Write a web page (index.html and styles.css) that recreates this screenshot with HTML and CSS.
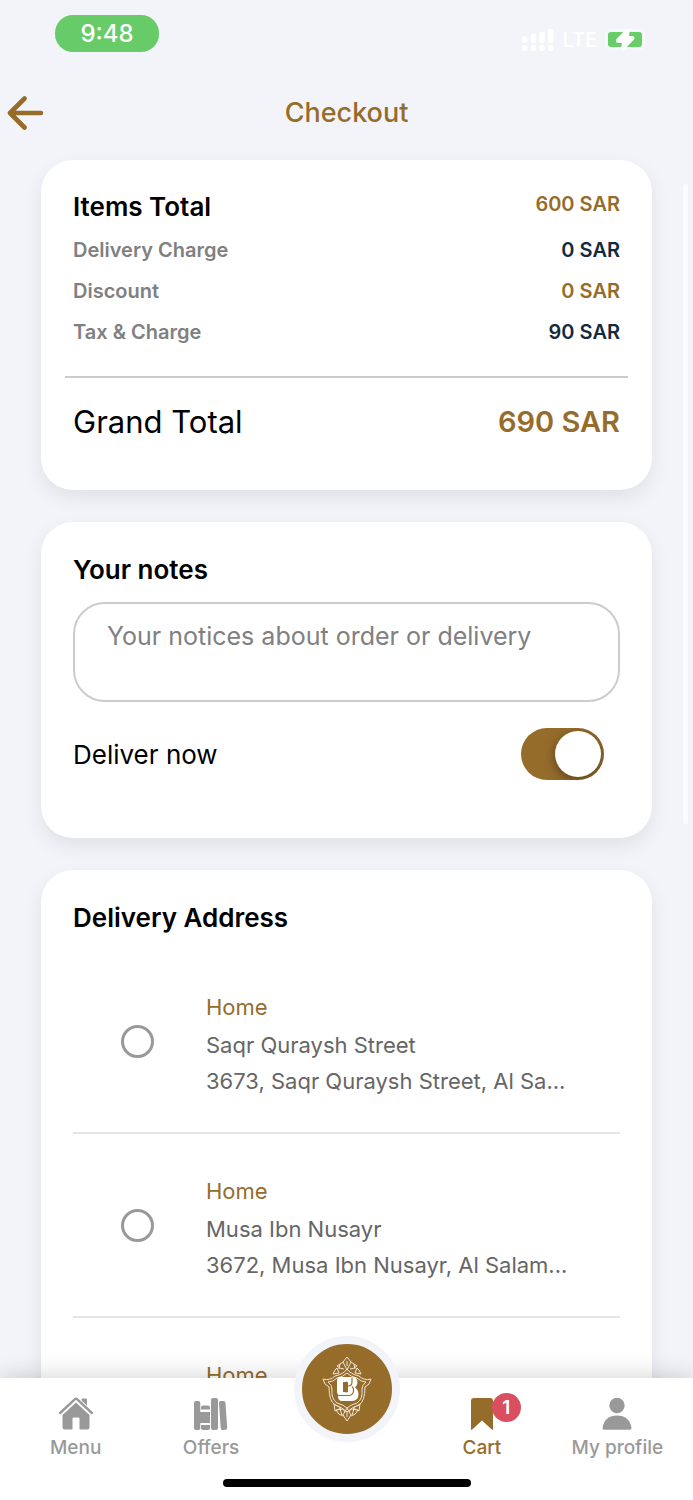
FILE: index.html
```html
<!DOCTYPE html>
<html lang="en">
  <head>
    <meta charset="utf-8">
    <meta name="viewport" content="width=device-width, initial-scale=1">
    <title>Checkout</title>
    <link rel="stylesheet" href="styles.css">
  </head>
  <body>
    <div class="status-bar">
      <span class="clock">9:48</span>
      <div class="signals">
        <svg width="32" height="22" viewBox="0 0 32 22" fill="#fff">
          <rect x="0" y="7" width="5.500" height="7" rx="2"/>
          <rect x="8.700" y="5" width="5.500" height="9" rx="2"/>
          <rect x="17.300" y="3" width="5.500" height="11" rx="2"/>
          <rect x="26" y="0" width="5.500" height="14" rx="2"/>
          <rect x="0" y="16" width="5.500" height="6" rx="2"/>
          <rect x="8.700" y="16" width="5.500" height="6" rx="2"/>
          <rect x="17.300" y="16" width="5.500" height="6" rx="2"/>
          <rect x="26" y="16" width="5.500" height="6" rx="2"/>
        </svg>
        <span>LTE</span>
        <svg width="44" height="22" viewBox="0 0 44 22">
          <rect x="1" y="1" width="38" height="19" rx="5" fill="none" stroke="#f7f8fb" stroke-width="2"/>
          <path d="M41 8q2 3 0 6z" fill="#f8f9fc"/>
          <rect x="3" y="3" width="34" height="15" rx="3" fill="#67cd67"/>
          <path d="M21 0L11.500 10Q10 13.500 13 14H17L15.500 20.500L18.500 21.500L29 10.500Q30.500 7.500 27.500 7H24L25 0.500z" fill="#fff"/>
        </svg>
      </div>
    </div>

    <header class="header">
      <button type="button" class="back" aria-label="Back">
        <svg width="37" height="34" viewBox="0 0 37 34" fill="none" stroke="#966c2b" stroke-width="4.600" stroke-linecap="round" stroke-linejoin="round">
          <path d="M17.500 2.500L3 17L17.500 31.500M3 17H34"/>
        </svg>
      </button>
      <h1>Checkout</h1>
    </header>

    <main class="content">
      <section class="card totals">
        <div class="row items">
          <h2>Items Total</h2>
          <span class="amount gold">600 SAR</span>
        </div>
        <div class="row">
          <span class="name">Delivery Charge</span>
          <span class="amount">0 SAR</span>
        </div>
        <div class="row">
          <span class="name">Discount</span>
          <span class="amount gold">0 SAR</span>
        </div>
        <div class="row">
          <span class="name">Tax &amp; Charge</span>
          <span class="amount">90 SAR</span>
        </div>
        <hr>
        <div class="row grand">
          <span>Grand Total</span>
          <strong>690 SAR</strong>
        </div>
      </section>

      <section class="card notes">
        <h2><label for="notes">Your notes</label></h2>
        <textarea id="notes" placeholder="Your notices about order or delivery"></textarea>
        <div class="deliver">
          <label for="deliver-now">Deliver now</label>
          <input type="checkbox" class="switch" id="deliver-now" checked>
        </div>
      </section>

      <section class="card addresses">
        <h2>Delivery Address</h2>
        <div class="address">
          <input type="radio" name="address" id="address1">
          <label for="address1">
            <span class="type">Home</span>
            <span>Saqr Quraysh Street</span>
            <span>3673, Saqr Quraysh Street, Al Sa...</span>
          </label>
        </div>
        <div class="address">
          <input type="radio" name="address" id="address2">
          <label for="address2">
            <span class="type">Home</span>
            <span>Musa Ibn Nusayr</span>
            <span>3672, Musa Ibn Nusayr, Al Salam...</span>
          </label>
        </div>
        <div class="address">
          <input type="radio" name="address" id="address3">
          <label for="address3">
            <span class="type">Home</span>
          </label>
        </div>
      </section>
    </main>

    <div class="scroll-thumb"></div>

    <footer class="bottom">
      <nav class="tabs">
        <a href="#menu">
          <svg width="34" height="34" viewBox="0 0 34 34" fill="#999">
            <path d="M22.500 2.500Q22.500 1.500 23.500 1.500H27Q28 1.500 28 2.500V12L22.500 7z"/>
            <path d="M17 5.500L30.500 18V30.500Q30.500 32.500 28.500 32.500H20.500V21.500Q20.500 20.500 19.500 20.500H14.500Q13.500 20.500 13.500 21.500V32.500H5.500Q3.500 32.500 3.500 30.500V18z"/>
            <path d="M1.200 16.500L16 2.500Q17 1.600 18 2.500L32.800 16.500" fill="none" stroke="#fff" stroke-width="5"/>
            <path d="M1.200 16L16 2.200Q17 1.300 18 2.200L32.800 16" fill="none" stroke="#999" stroke-width="2.400" stroke-linecap="round"/>
          </svg>
          <span>Menu</span>
        </a>
        <a href="#offers">
          <svg width="34" height="34" viewBox="0 0 34 34" fill="#999">
            <rect x="0" y="4" width="6.300" height="29" rx="2"/>
            <path d="M7 12.500V10.500Q7 8.500 9 8.500H14Q16 8.500 16 10.500V12.500z"/>
            <rect x="6" y="15" width="10" height="11"/>
            <path d="M7 28H16V31Q16 33 14 33H9Q7 33 7 31z"/>
            <rect x="17" y="1" width="7" height="32" rx="2"/>
            <rect x="25.800" y="4" width="6.500" height="29" rx="2" transform="rotate(-4 29 18)"/>
          </svg>
          <span>Offers</span>
        </a>
        <a href="#home" class="brand" aria-label="Home">
          <svg width="90" height="90" viewBox="0 0 90 90" fill="none" stroke="#efe6d8" stroke-width="1" stroke-linejoin="round">
            <path d="M45 25Q42 30 33 32Q28 37 21 35Q22 41 27 43Q27 57 33 61Q40 63 45 68Q50 63 57 61Q63 57 63 43Q68 41 69 35Q62 37 57 32Q48 30 45 25z"/>
            <path d="M45 29Q41 33 35 34Q31 38 26 38Q30 41 30 45Q29 55 35 59Q42 61 45 64Q48 61 55 59Q61 55 60 45Q60 41 64 38Q59 38 55 34Q49 33 45 29z"/>
            <path d="M45 13L49 18L45 26L41 18zM45 17V22"/>
            <path d="M41 18L35 22Q38 25 42 25M49 18L55 22Q52 25 48 25M38 20L37 25M52 20L53 25"/>
            <path d="M35 24L37 29L31 30L33 26zM55 24L53 29L59 30L57 26z"/>
            <path d="M45 77L41 71L45 64L49 71zM45 68V73"/>
            <path d="M41 72Q36 71 34 66L41 65L43 68M49 72Q54 71 56 66L49 65L47 68M38 65L40 71M52 65L50 71"/>
            <path d="M32 60L33 67L39 64zM58 60L57 67L51 64z"/>
            <path d="M38 33H50Q55.500 33 55.500 38.500Q55.500 41.500 53 43.500Q56.500 46 56.500 50Q56.500 57 50 57H40Q36 57 36 52H38Q35 51 35 47V37Q35 33 38 33z" fill="#fff" stroke="none"/>
            <path d="M41 38H46V48H41z" fill="#966c2b" stroke="none"/>
            <path d="M45 38Q43 38 43 40V46Q43 48 45 48M50 33.500V38Q50 42 46 42M50 42.500Q52 44 51.500 47Q51 51.500 46 51.500H37" stroke="#966c2b" stroke-width="1.200"/>
          </svg>
        </a>
        <a href="#cart" class="active">
          <svg width="34" height="34" viewBox="0 0 34 34" fill="#966c2b">
            <path d="M6 4Q6 1 9 1H25Q28 1 28 4V32Q28 33.500 26.800 32.500L17 23.500L7.200 32.500Q6 33.500 6 32z"/>
          </svg>
          <span>Cart</span>
          <b class="badge">1</b>
        </a>
        <a href="#profile">
          <svg width="34" height="34" viewBox="0 0 34 34" fill="#999">
            <circle cx="17" cy="8.500" r="7.700"/>
            <path d="M2.500 31C3.500 23 9 18.500 17 18.500S30.500 23 31.500 31Q31.500 32.800 30 32.800H4Q2.500 32.800 2.500 31z"/>
          </svg>
          <span>My profile</span>
        </a>
      </nav>
      <div class="home-bar"></div>
    </footer>
  </body>
</html>
```

FILE: styles.css
```css
* {
  box-sizing: border-box;
}

body {
  margin: 0;
  height: 100vh;
  display: flex;
  flex-direction: column;
  overflow: hidden;
  background: #f3f4f9;
  color: #000;
  font-family: Inter, "Liberation Sans", sans-serif;
  font-size: 20px;
}

h1, h2 {
  margin: 0;
}

/* status bar */
.status-bar {
  display: flex;
  justify-content: space-between;
  align-items: flex-start;
  padding: 15px 44px 0 55px;
}

.clock {
  width: 104px;
  line-height: 37px;
  border-radius: 18px;
  background: #67cb67;
  color: #fff;
  font-size: 24px;
  font-weight: 500;
  text-align: center;
}

.signals {
  display: flex;
  align-items: center;
  gap: 8px;
  padding-top: 12px;
  color: #fff;
  font-size: 20px;
  font-weight: 500;
  line-height: 26px;
}

.header {
  display: grid;
  grid-template-columns: 80px 1fr 80px;
  align-items: center;
  height: 107px;
  flex-shrink: 0;
  padding-top: 12px;
}

.header h1 {
  color: #966c2b;
  font-size: 27px;
  font-weight: 500;
  line-height: 32px;
  text-align: center;
}

.back {
  padding: 0 0 0 7px;
  border: 0;
  background: none;
  text-align: left;
  cursor: pointer;
}

.back svg {
  display: block;
}

/* cards */
.content {
  flex: 1;
  min-height: 0;
  display: flex;
  flex-direction: column;
  gap: 32px;
  padding: 0 41px;
}

.card {
  flex-shrink: 0;
  padding: 32px 32px 48px;
  border-radius: 32px;
  background: #fff;
  box-shadow: 0 8px 20px rgba(0, 0, 0, 0.08);
}

.card h2 {
  font-size: 26px;
  font-weight: 600;
  line-height: 32px;
}

.row {
  display: flex;
  justify-content: space-between;
  margin-bottom: 16px;
  font-weight: 600;
  line-height: 25px;
}

.items h2 {
  line-height: 30px;
}

.name {
  color: #808080;
}

.amount {
  color: #132b3c;
}

.gold {
  color: #966c2b;
}

.totals hr {
  height: 2px;
  margin: 31px -8px 24px;
  border: 0;
  background: #ccc;
}

.grand {
  margin: 0;
  font-size: 31px;
  font-weight: 400;
  line-height: 40px;
}

.grand strong {
  color: #966c2b;
  font-size: 29px;
  font-weight: 600;
}

/* notes */
.notes {
  padding-bottom: 58px;
}

.notes textarea {
  display: block;
  width: 100%;
  height: 100px;
  margin: 16px 0 26px;
  padding: 16px 32px;
  border: 2px solid #ccc;
  border-radius: 32px;
  background: #fff;
  font: 25px/32px Inter, "Liberation Sans", sans-serif;
  resize: none;
}

.notes textarea::placeholder {
  color: #808080;
}

.deliver {
  display: flex;
  justify-content: space-between;
  align-items: center;
  padding-right: 16px;
  font-size: 26px;
}

.switch {
  appearance: none;
  display: flex;
  width: 83px;
  height: 52px;
  margin: 0;
  padding: 3px;
  border-radius: 26px;
  background: #ccc;
}

.switch::before {
  content: "";
  width: 46px;
  height: 46px;
  border-radius: 50%;
  background: #fff;
  box-shadow: 0 3px 12px rgba(0, 0, 0, 0.4);
}

.switch:checked {
  justify-content: flex-end;
  background: #966c2b;
  overflow: hidden;
}

/* addresses */
.addresses h2 {
  margin-bottom: 16px;
}

.address {
  display: flex;
  align-items: center;
  gap: 52px;
  min-height: 184px;
  padding: 0 48px;
  border-bottom: 2px solid #e6e6e6;
}

.address input {
  appearance: none;
  flex-shrink: 0;
  width: 33px;
  height: 33px;
  margin: 0;
  border: 3px solid #999;
  border-radius: 50%;
}

.address input:checked {
  border-width: 10px;
  border-color: #966c2b;
}

.address label {
  display: flex;
  flex-direction: column;
  align-self: flex-start;
  padding-top: 39px;
  color: #666;
  font-size: 22px;
  line-height: 36px;
  white-space: nowrap;
}

.address .type {
  margin-bottom: 2px;
  color: #966c2b;
}

.scroll-thumb {
  position: absolute;
  top: 184px;
  right: 5px;
  width: 5px;
  height: 640px;
  border-radius: 3px;
  background: #fafbfd;
}

/* bottom navigation */
.bottom {
  position: relative;
  flex-shrink: 0;
  background: #fff;
  box-shadow: 0 0 24px rgba(0, 0, 0, 0.2);
}

.tabs {
  display: grid;
  grid-template-columns: repeat(5, 1fr);
  height: 101px;
  padding: 0 8px;
}

.tabs a {
  position: relative;
  display: flex;
  flex-direction: column;
  align-items: center;
  gap: 4px;
  padding-top: 19px;
  color: #999;
  font-size: 19px;
  font-weight: 500;
  line-height: 26px;
  text-decoration: none;
}

.tabs .active {
  color: #966c2b;
}

.tabs .brand {
  position: absolute;
  top: -42px;
  left: 50%;
  padding: 0;
  border: 8px solid #f3f4f9;
  border-radius: 50%;
  background: #966c2b;
  transform: translateX(-50%);
}

.tabs .brand + a {
  grid-column: 4;
}

.badge {
  position: absolute;
  top: 15px;
  left: 50%;
  width: 29px;
  margin-left: 10px;
  border-radius: 50%;
  background: #d94f60;
  color: #fff;
  font-size: 19px;
  font-weight: 600;
  line-height: 29px;
  text-align: center;
}

.home-bar {
  width: 248px;
  height: 8px;
  margin: 0 auto 13px;
  border-radius: 4px;
  background: #000;
}
```
